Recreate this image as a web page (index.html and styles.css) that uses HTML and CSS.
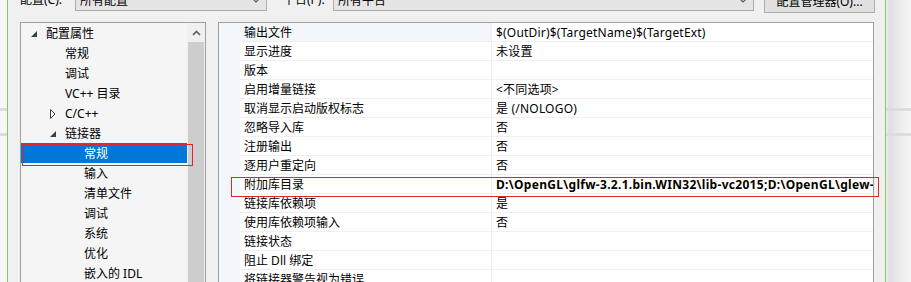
FILE: index.html
```html
<!DOCTYPE html>
<html lang="zh-CN">
<head>
    <meta charset="UTF-8">
    <title>链接器 - 常规</title>
    <link rel="stylesheet" href="styles.css">
</head>
<body>
<div class="screen">
    <div class="backdrop backdrop-left"></div>

    <div class="dialog">
        <!-- Configuration / platform bar -->
        <div class="toolbar">
            <span class="label label-config">配置(C):</span>
            <div class="combo combo-config">
                <span>所有配置</span>
                <svg class="chevron" width="8" height="5" viewBox="0 0 8 5"><polyline points="0.5,0.5 4,4 7.5,0.5" fill="none" stroke="#555" stroke-width="1.2"/></svg>
            </div>
            <span class="label label-platform">平台(P):</span>
            <div class="combo combo-platform">
                <span>所有平台</span>
                <svg class="chevron" width="8" height="5" viewBox="0 0 8 5"><polyline points="0.5,0.5 4,4 7.5,0.5" fill="none" stroke="#555" stroke-width="1.2"/></svg>
            </div>
            <button class="btn">配置管理器(O)...</button>
        </div>

        <div class="panes">
            <!-- Property page tree -->
            <div class="tree-pane">
                <ul class="tree">
                    <li class="tree-row lvl0"><span class="toggle"><svg width="6" height="6" viewBox="0 0 6 6"><polygon points="6,0 6,6 0,6" fill="#404040"/></svg></span>配置属性</li>
                    <li class="tree-row lvl1"><span class="toggle"></span>常规</li>
                    <li class="tree-row lvl1"><span class="toggle"></span>调试</li>
                    <li class="tree-row lvl1"><span class="toggle"></span>VC++ 目录</li>
                    <li class="tree-row lvl1"><span class="toggle"><svg width="6" height="10" viewBox="0 0 6 10"><polygon points="0.5,0.5 5,5 0.5,9.5" fill="none" stroke="#404040" stroke-width="1"/></svg></span>C/C++</li>
                    <li class="tree-row lvl1"><span class="toggle"><svg width="6" height="6" viewBox="0 0 6 6"><polygon points="6,0 6,6 0,6" fill="#404040"/></svg></span>链接器</li>
                    <li class="tree-row lvl2 selected"><span class="toggle"></span>常规</li>
                    <li class="tree-row lvl2"><span class="toggle"></span>输入</li>
                    <li class="tree-row lvl2"><span class="toggle"></span>清单文件</li>
                    <li class="tree-row lvl2"><span class="toggle"></span>调试</li>
                    <li class="tree-row lvl2"><span class="toggle"></span>系统</li>
                    <li class="tree-row lvl2"><span class="toggle"></span>优化</li>
                    <li class="tree-row lvl2"><span class="toggle"></span>嵌入的 IDL</li>
                    <li class="tree-row lvl2"><span class="toggle"></span>Windows 元数据</li>
                </ul>
                <div class="scrollbar">
                    <div class="scroll-up">
                        <svg width="9" height="6" viewBox="0 0 9 6"><polyline points="1,5 4.5,1.5 8,5" fill="none" stroke="#606060" stroke-width="1.6"/></svg>
                    </div>
                    <div class="scroll-thumb"></div>
                </div>
            </div>

            <!-- Property grid -->
            <div class="grid-pane">
                <div class="prop-row hot"><span class="gutter"></span><span class="cell name">输出文件</span><span class="cell value">$(OutDir)$(TargetName)$(TargetExt)</span></div>
                <div class="prop-row"><span class="gutter"></span><span class="cell name">显示进度</span><span class="cell value">未设置</span></div>
                <div class="prop-row"><span class="gutter"></span><span class="cell name">版本</span><span class="cell value"></span></div>
                <div class="prop-row"><span class="gutter"></span><span class="cell name">启用增量链接</span><span class="cell value">&lt;不同选项&gt;</span></div>
                <div class="prop-row"><span class="gutter"></span><span class="cell name">取消显示启动版权标志</span><span class="cell value">是 (/NOLOGO)</span></div>
                <div class="prop-row"><span class="gutter"></span><span class="cell name">忽略导入库</span><span class="cell value">否</span></div>
                <div class="prop-row"><span class="gutter"></span><span class="cell name">注册输出</span><span class="cell value">否</span></div>
                <div class="prop-row"><span class="gutter"></span><span class="cell name">逐用户重定向</span><span class="cell value">否</span></div>
                <div class="prop-row marked"><span class="gutter"></span><span class="cell name">附加库目录</span><span class="cell value bold">D:\OpenGL\glfw-3.2.1.bin.WIN32\lib-vc2015;D:\OpenGL\glew-2.0.0\lib\Release\Win32</span></div>
                <div class="prop-row"><span class="gutter"></span><span class="cell name">链接库依赖项</span><span class="cell value">是</span></div>
                <div class="prop-row"><span class="gutter"></span><span class="cell name">使用库依赖项输入</span><span class="cell value">否</span></div>
                <div class="prop-row"><span class="gutter"></span><span class="cell name">链接状态</span><span class="cell value"></span></div>
                <div class="prop-row"><span class="gutter"></span><span class="cell name">阻止 Dll 绑定</span><span class="cell value"></span></div>
                <div class="prop-row"><span class="gutter"></span><span class="cell name">将链接器警告视为错误</span><span class="cell value"></span></div>
                <div class="prop-row"><span class="gutter"></span><span class="cell name">强制文件输出</span><span class="cell value"></span></div>
            </div>
        </div>
    </div>

    <div class="backdrop backdrop-right"></div>
</div>
</body>
</html>
```

FILE: styles.css
```css
* {
    box-sizing: border-box;
}

body {
    margin: 0;
    width: 911px;
    height: 282px;
    overflow: hidden;
    font-family: "Noto Sans", "Noto Sans CJK SC", sans-serif;
    font-size: 12px;
    color: #000;
    background: #f7f7f7;
}

.screen {
    display: flex;
    height: 282px;
}

/* window behind the dialog */
.backdrop {
    flex: none;
    height: 100%;
}
.backdrop-left {
    width: 7px;
    background:
        linear-gradient(to bottom, transparent 108px, #dcdce4 108px, #dcdce4 111px, transparent 111px,
            transparent 133px, #dcdce4 133px, #dcdce4 136px, transparent 136px),
        #f7f7f7;
}
.backdrop-right {
    width: 25px;
    background:
        linear-gradient(to bottom, transparent 108px, #dcdce4 108px, #dcdce4 111px, transparent 111px,
            transparent 133px, #dcdce4 133px, #dcdce4 136px, transparent 136px),
        linear-gradient(to right, #f0f0f0 0, #dedede 3px, #ebebeb 12px, #f5f5f5 25px);
}

.dialog {
    flex: none;
    width: 879px;
    height: 100%;
    border-left: 1px solid #86c95a;
    border-right: 1px solid #86c95a;
    background: #f0f0f0;
    padding-left: 12px;
}

/* top bar */
.toolbar {
    display: flex;
    align-items: flex-start;
    height: 24px;
    margin-top: -11px;
}
.label {
    line-height: 22px;
    white-space: nowrap;
}
.label-config {
    width: 55px;
}
.label-platform {
    width: 50px;
    margin-left: 16px;
}
.combo {
    height: 22px;
    display: flex;
    align-items: center;
    justify-content: space-between;
    padding: 0 6px 0 4px;
    border: 1px solid #acacac;
    background: #e5e5e5;
}
.combo-config {
    width: 192px;
}
.combo-platform {
    width: 421px;
}
.btn {
    width: 111px;
    height: 24px;
    margin-left: 10px;
    padding: 0;
    border: 1px solid #adadad;
    background: #e1e1e1;
    font: inherit;
    color: #000;
}

.panes {
    display: flex;
    gap: 12px;
    margin-top: 9px;
}

/* tree */
.tree-pane {
    width: 186px;
    height: 300px;
    display: flex;
    border: 1px solid #a0a0a0;
    background: #f5f5f5;
}
.tree {
    flex: 1;
    margin: 0;
    padding: 0;
    list-style: none;
}
.tree-row {
    height: 20px;
    display: flex;
    align-items: center;
    padding-top: 2px;
    line-height: 18px;
    white-space: nowrap;
}
.tree-row.lvl0 { padding-left: 6px; }
.tree-row.lvl1 { padding-left: 25px; }
.tree-row.lvl2 { padding-left: 44px; }
.toggle {
    width: 19px;
    flex: none;
    display: flex;
    align-items: center;
    padding-left: 4px;
}
.tree-row.selected {
    position: relative;
    background: #0078d7;
    color: #fff;
}
.tree-row.selected::after {
    content: "";
    position: absolute;
    left: 1px;
    top: 1px;
    width: 169px;
    height: 20px;
    border: 1px solid #e3262e;
}

.scrollbar {
    width: 18px;
    flex: none;
    padding: 0 1px;
    background: #f0f0f0;
}
.scroll-up {
    height: 19px;
    display: flex;
    align-items: center;
    justify-content: center;
}
.scroll-thumb {
    height: 260px;
    background: #cdcdcd;
}

/* property grid */
.grid-pane {
    width: 656px;
    height: 300px;
    border: 1px solid #a0a0a0;
    background: linear-gradient(to right, #f3f6fb 21px, #fff 21px);
}
.prop-row {
    display: grid;
    grid-template-columns: 21px 252px 1fr;
    height: 19px;
}
.cell {
    padding-left: 4px;
    line-height: 20px;
    border-bottom: 1px solid #f0f0f0;
    white-space: nowrap;
    overflow: hidden;
}
.cell.name {
    border-right: 1px solid #f0f0f0;
}
.cell.value {
    letter-spacing: 0.2px;
}
.prop-row.hot .name {
    background: #f3f6fb;
}
.cell.bold {
    font-weight: bold;
    letter-spacing: 0.3px;
}
.prop-row.marked {
    position: relative;
}
.prop-row.marked::after {
    content: "";
    position: absolute;
    left: 12px;
    right: -6px;
    top: 2px;
    height: 18px;
    border: 1px solid #e3262e;
}
```
